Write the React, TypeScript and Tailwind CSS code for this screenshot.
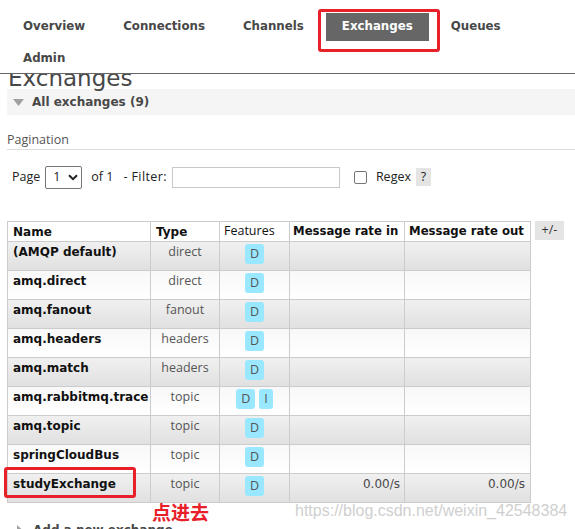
const navItems = ["Overview", "Connections", "Channels", "Exchanges", "Queues", "Admin"];

const exchanges = [
  { name: "(AMQP default)", type: "direct", features: ["D"], rateIn: "", rateOut: "" },
  { name: "amq.direct", type: "direct", features: ["D"], rateIn: "", rateOut: "" },
  { name: "amq.fanout", type: "fanout", features: ["D"], rateIn: "", rateOut: "" },
  { name: "amq.headers", type: "headers", features: ["D"], rateIn: "", rateOut: "" },
  { name: "amq.match", type: "headers", features: ["D"], rateIn: "", rateOut: "" },
  { name: "amq.rabbitmq.trace", type: "topic", features: ["D", "I"], rateIn: "", rateOut: "" },
  { name: "amq.topic", type: "topic", features: ["D"], rateIn: "", rateOut: "" },
  { name: "springCloudBus", type: "topic", features: ["D"], rateIn: "", rateOut: "" },
  { name: "studyExchange", type: "topic", features: ["D"], rateIn: "0.00/s", rateOut: "0.00/s" },
];

export default function App() {
  return (
    <div className="relative w-[575px] h-[529px] overflow-hidden bg-white font-['DejaVu_Sans',Verdana,sans-serif] text-[12px] text-[#484848]">
      {/* top menu */}
      <nav className="relative z-10 bg-white border-b border-[#666] pl-[7px] pt-[13px]">
        <ul className="flex flex-wrap gap-x-[6px] gap-y-[4px]">
          {navItems.map((item) => (
            <li
              key={item}
              className={
                item === "Exchanges"
                  ? "h-7 px-4 leading-[26px] font-bold text-[11.8px] bg-[#666] text-white"
                  : "h-7 px-4 leading-[26px] font-bold text-[11.8px] text-[#484848]"
              }
            >
              {item}
            </li>
          ))}
        </ul>
      </nav>

      <h1 className="-mt-[9px] h-[24px] pl-[8px] text-[23px] leading-[27px] font-normal text-[#484848]">Exchanges</h1>

      <div className="ml-[7px] h-[26px] bg-[#f5f5f5] flex items-center pl-[6px] gap-[8px]">
        <svg width="11" height="7" viewBox="0 0 11 7">
          <path d="M0 0 L11 0 L5.5 7 Z" fill="#a0a0a0" />
        </svg>
        <span className="font-bold text-[#484848]">All exchanges (9)</span>
      </div>

      <h3 className="ml-[7px] mt-[16px] border-b border-[#ddd] font-['Open_Sans',sans-serif] text-[12.5px] leading-[18px] text-[#555]">
        Pagination
      </h3>

      <div className="mt-[15px] h-[24px] flex items-center pl-[12px] font-['Open_Sans',sans-serif] text-[12.5px] text-[#222]">
        <span>Page</span>
        <div className="ml-[5px] w-[37px] h-[23px] border border-[#767676] rounded-[2px] flex items-center pl-[7px] gap-[8px]">
          <span>1</span>
          <svg width="10" height="7" viewBox="0 0 10 7">
            <path d="M1 1.2 L5 5.2 L9 1.2" fill="none" stroke="#222" strokeWidth="2" />
          </svg>
        </div>
        <span className="ml-[9px]">of 1</span>
        <span className="ml-[10px] tracking-[0.4px]">- Filter:</span>
        <div className="ml-[5px] w-[168px] h-[21px] border border-[#c8c8c8]" />
        <div className="ml-[14px] w-[13px] h-[13px] border border-[#767676] rounded-[2px]" />
        <span className="ml-[9px]">Regex</span>
        <span className="ml-[5px] w-[15px] h-[18px] bg-[#e4e4e4] flex items-center justify-center">?</span>
      </div>

      <div className="mt-[32px] pl-[7px] flex items-start gap-[4px]">
        <table className="table-fixed w-[523px] border-collapse border border-[#ccc]">
          <colgroup>
            <col className="w-[143px]" />
            <col className="w-[69px]" />
            <col className="w-[70px]" />
            <col className="w-[115px]" />
            <col className="w-[126px]" />
          </colgroup>
          <thead>
            <tr className="h-[20px] bg-white text-[#111] whitespace-nowrap">
              <th className="border border-[#ccc] px-[5px] text-left font-bold">Name</th>
              <th className="border border-[#ccc] px-[5px] text-left font-bold">Type</th>
              <th className="border border-[#ccc] px-[4px] text-left font-normal font-['Open_Sans',sans-serif] text-[12.5px]">Features</th>
              <th className="border border-[#ccc] px-[3px] text-left font-bold text-[11.7px] overflow-hidden">Message rate in</th>
              <th className="border border-[#ccc] px-[4px] text-left font-bold text-[11.7px] overflow-hidden">Message rate out</th>
            </tr>
          </thead>
          <tbody>
            {exchanges.map((ex, i) => (
              <tr
                key={ex.name}
                className={
                  i % 2 === 0
                    ? "h-[29px] bg-gradient-to-b from-[#f0f0f0] to-[#e0e0e0]"
                    : "h-[29px] bg-gradient-to-b from-[#f8f8f8] to-[#ffffff]"
                }
              >
                <td className="border border-[#ccc] px-[5px] pt-[1px] align-top font-bold text-[#111] whitespace-nowrap overflow-hidden">{ex.name}</td>
                <td className="border border-[#ccc] pt-[1px] align-top text-center font-['Open_Sans',sans-serif] text-[12.5px] text-[#555]">
                  {ex.type}
                </td>
                <td className="border border-[#ccc] pt-[2px] align-top text-center">
                  <div className="flex justify-center gap-[4px]">
                    {ex.features.map((f) => (
                      <span
                        key={f}
                        className="h-[20px] px-[5px] rounded-[3px] bg-[#99e8ff] flex items-center font-['Open_Sans',sans-serif] text-[12.5px] text-[#555]"
                      >
                        {f}
                      </span>
                    ))}
                  </div>
                </td>
                <td className="border border-[#ccc] pr-[4px] pt-[1px] align-top text-right text-[#484848]">{ex.rateIn}</td>
                <td className="border border-[#ccc] pr-[5px] pt-[1px] align-top text-right text-[#484848]">{ex.rateOut}</td>
              </tr>
            ))}
          </tbody>
        </table>
        <span className="w-[29px] h-[19px] bg-[#e4e4e4] flex items-center justify-center font-['Open_Sans',sans-serif] text-[12.5px] text-[#333]">
          +/-
        </span>
      </div>

      <div className="mt-[14px] h-[26px] flex items-center pl-[17px] gap-[10px]">
        <svg width="6" height="11" viewBox="0 0 6 11">
          <path d="M0 0 L6 5.5 L0 11 Z" fill="#a0a0a0" />
        </svg>
        <span className="font-bold text-[#484848]">Add a new exchange</span>
      </div>

      {/* annotations */}
      <div className="absolute left-[318px] top-[9px] w-[122px] h-[43px] border-[3px] border-[#e8202a] rounded-[3px] z-20" />
      <div className="absolute left-[4px] top-[467px] w-[132px] h-[31px] border-[3px] border-[#e8202a] rounded-[3px]" />
      <div className="absolute left-[152px] top-[502px] font-['Noto_Sans_CJK_SC',sans-serif] font-bold text-[19px] leading-[19px] text-[#e8202a]">
        点进去
      </div>
      <div className="absolute left-[295px] top-[502px] font-['Liberation_Sans',Arial,sans-serif] text-[16px] leading-[18px] text-[#cfcfcf]">
        https://blog.csdn.net/weixin_42548384
      </div>
    </div>
  );
}
